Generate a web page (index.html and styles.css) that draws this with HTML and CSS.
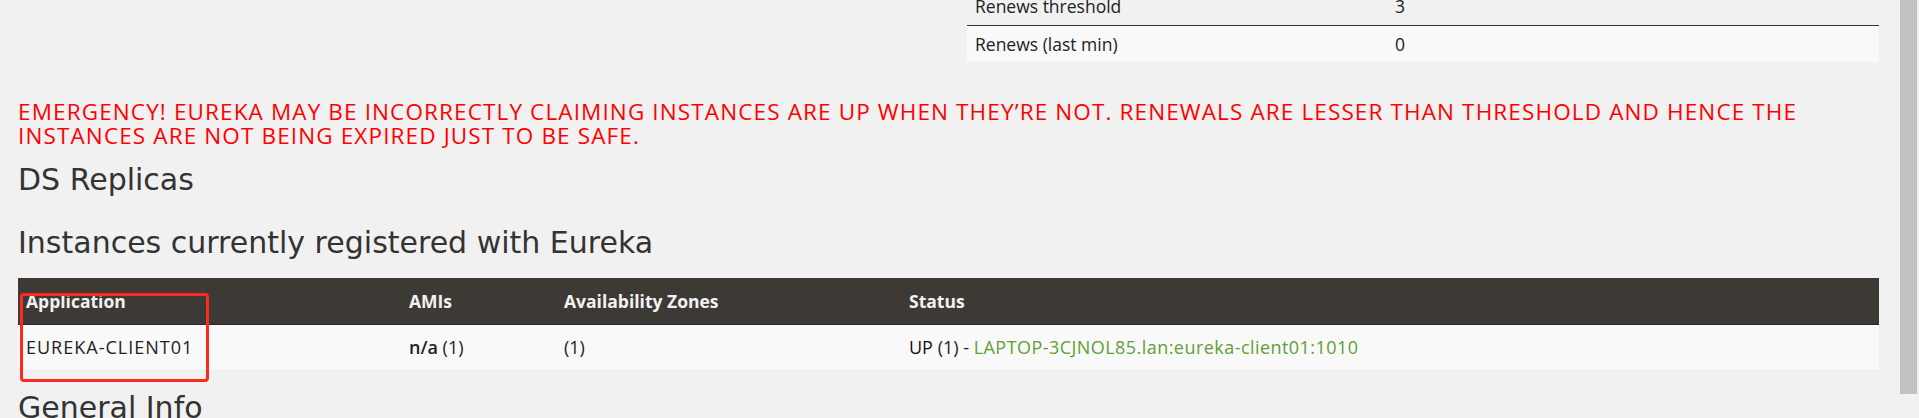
FILE: index.html
```html
<!DOCTYPE html>
<html lang="en">
<head>
  <meta charset="UTF-8">
  <title>Eureka</title>
  <link rel="stylesheet" href="styles.css">
</head>
<body>
  <div class="page">
    <table class="stats">
      <tr><td class="k">Renews threshold</td><td>3</td></tr>
      <tr class="odd"><td class="k">Renews (last min)</td><td>0</td></tr>
    </table>

    <p class="alert">EMERGENCY! EUREKA MAY BE INCORRECTLY CLAIMING INSTANCES ARE UP WHEN THEY’RE NOT. RENEWALS ARE LESSER THAN THRESHOLD AND HENCE THE INSTANCES ARE NOT BEING EXPIRED JUST TO BE SAFE.</p>

    <h2 class="first">DS Replicas</h2>
    <h2>Instances currently registered with Eureka</h2>

    <table class="instances">
      <thead>
        <tr><th class="c1">Application</th><th class="c2">AMIs</th><th class="c3">Availability Zones</th><th>Status</th></tr>
      </thead>
      <tbody>
        <tr><td class="app">EUREKA-CLIENT01</td><td><b>n/a</b> (1)</td><td>(1)</td><td><span class="up">UP</span> (1) - <a href="#">LAPTOP-3CJNOL85.lan:eureka-client01:1010</a></td></tr>
      </tbody>
    </table>

    <h2>General Info</h2>
  </div>
  <div class="scrollbar"><div class="thumb"></div></div>

  <!-- annotation box drawn over the screenshot -->
  <div class="mark"></div>
</body>
</html>
```

FILE: styles.css
```css
body { margin: 0; height: 418px; overflow: hidden; display: flex; background: #f1f1f1; font-family: "Open Sans", Arial, sans-serif; font-size: 17.5px; color: #222; }
.page { flex: 1; padding: 0 21px 0 18px; }
.scrollbar { width: 19px; }
.thumb { width: 17px; height: 394px; background: #c1c1c1; }

table { border-collapse: collapse; }
td, th { padding: 0 8px; text-align: left; }

.stats { width: 912px; margin: -12px 0 0 949px; }
.stats tr { height: 37px; }
.stats tr.odd { background: #f9f9f9; border-top: 1px solid #333; }
.stats .k { width: 404px; }

.alert { margin: 38px 0 0; font-size: 22.5px; line-height: 24px; letter-spacing: 1.13px; color: #ff0000; }

h2 { margin: 27px 0 0; font-family: "DejaVu Sans", sans-serif; font-weight: normal; font-size: 30px; line-height: 36px; color: #333; }
h2.first { margin-top: 14px; }

.instances { width: 100%; margin-top: 17px; font-size: 18px; }
.instances thead tr { background: #3d3a35; height: 46px; border-bottom: 1px solid #2c2925; }
.instances th { color: #f2f2f2; font-weight: bold; font-size: 17.5px; }
.instances tbody tr { background: #f9f9f9; height: 45px; }
.instances .c1 { width: 367px; }
.instances .c2 { width: 139px; }
.instances .c3 { width: 329px; }
.instances .app { letter-spacing: 1px; }
.instances b { font-weight: 600; }
.instances .up { color: #111; }
.instances a { color: #5fa134; text-decoration: none; letter-spacing: 0.45px; }
.instances + h2 { margin-top: 21px; }

.mark { position: absolute; left: 20px; top: 293px; width: 183px; height: 83px; border: 3px solid #ff2a1f; border-radius: 4px; }
```
